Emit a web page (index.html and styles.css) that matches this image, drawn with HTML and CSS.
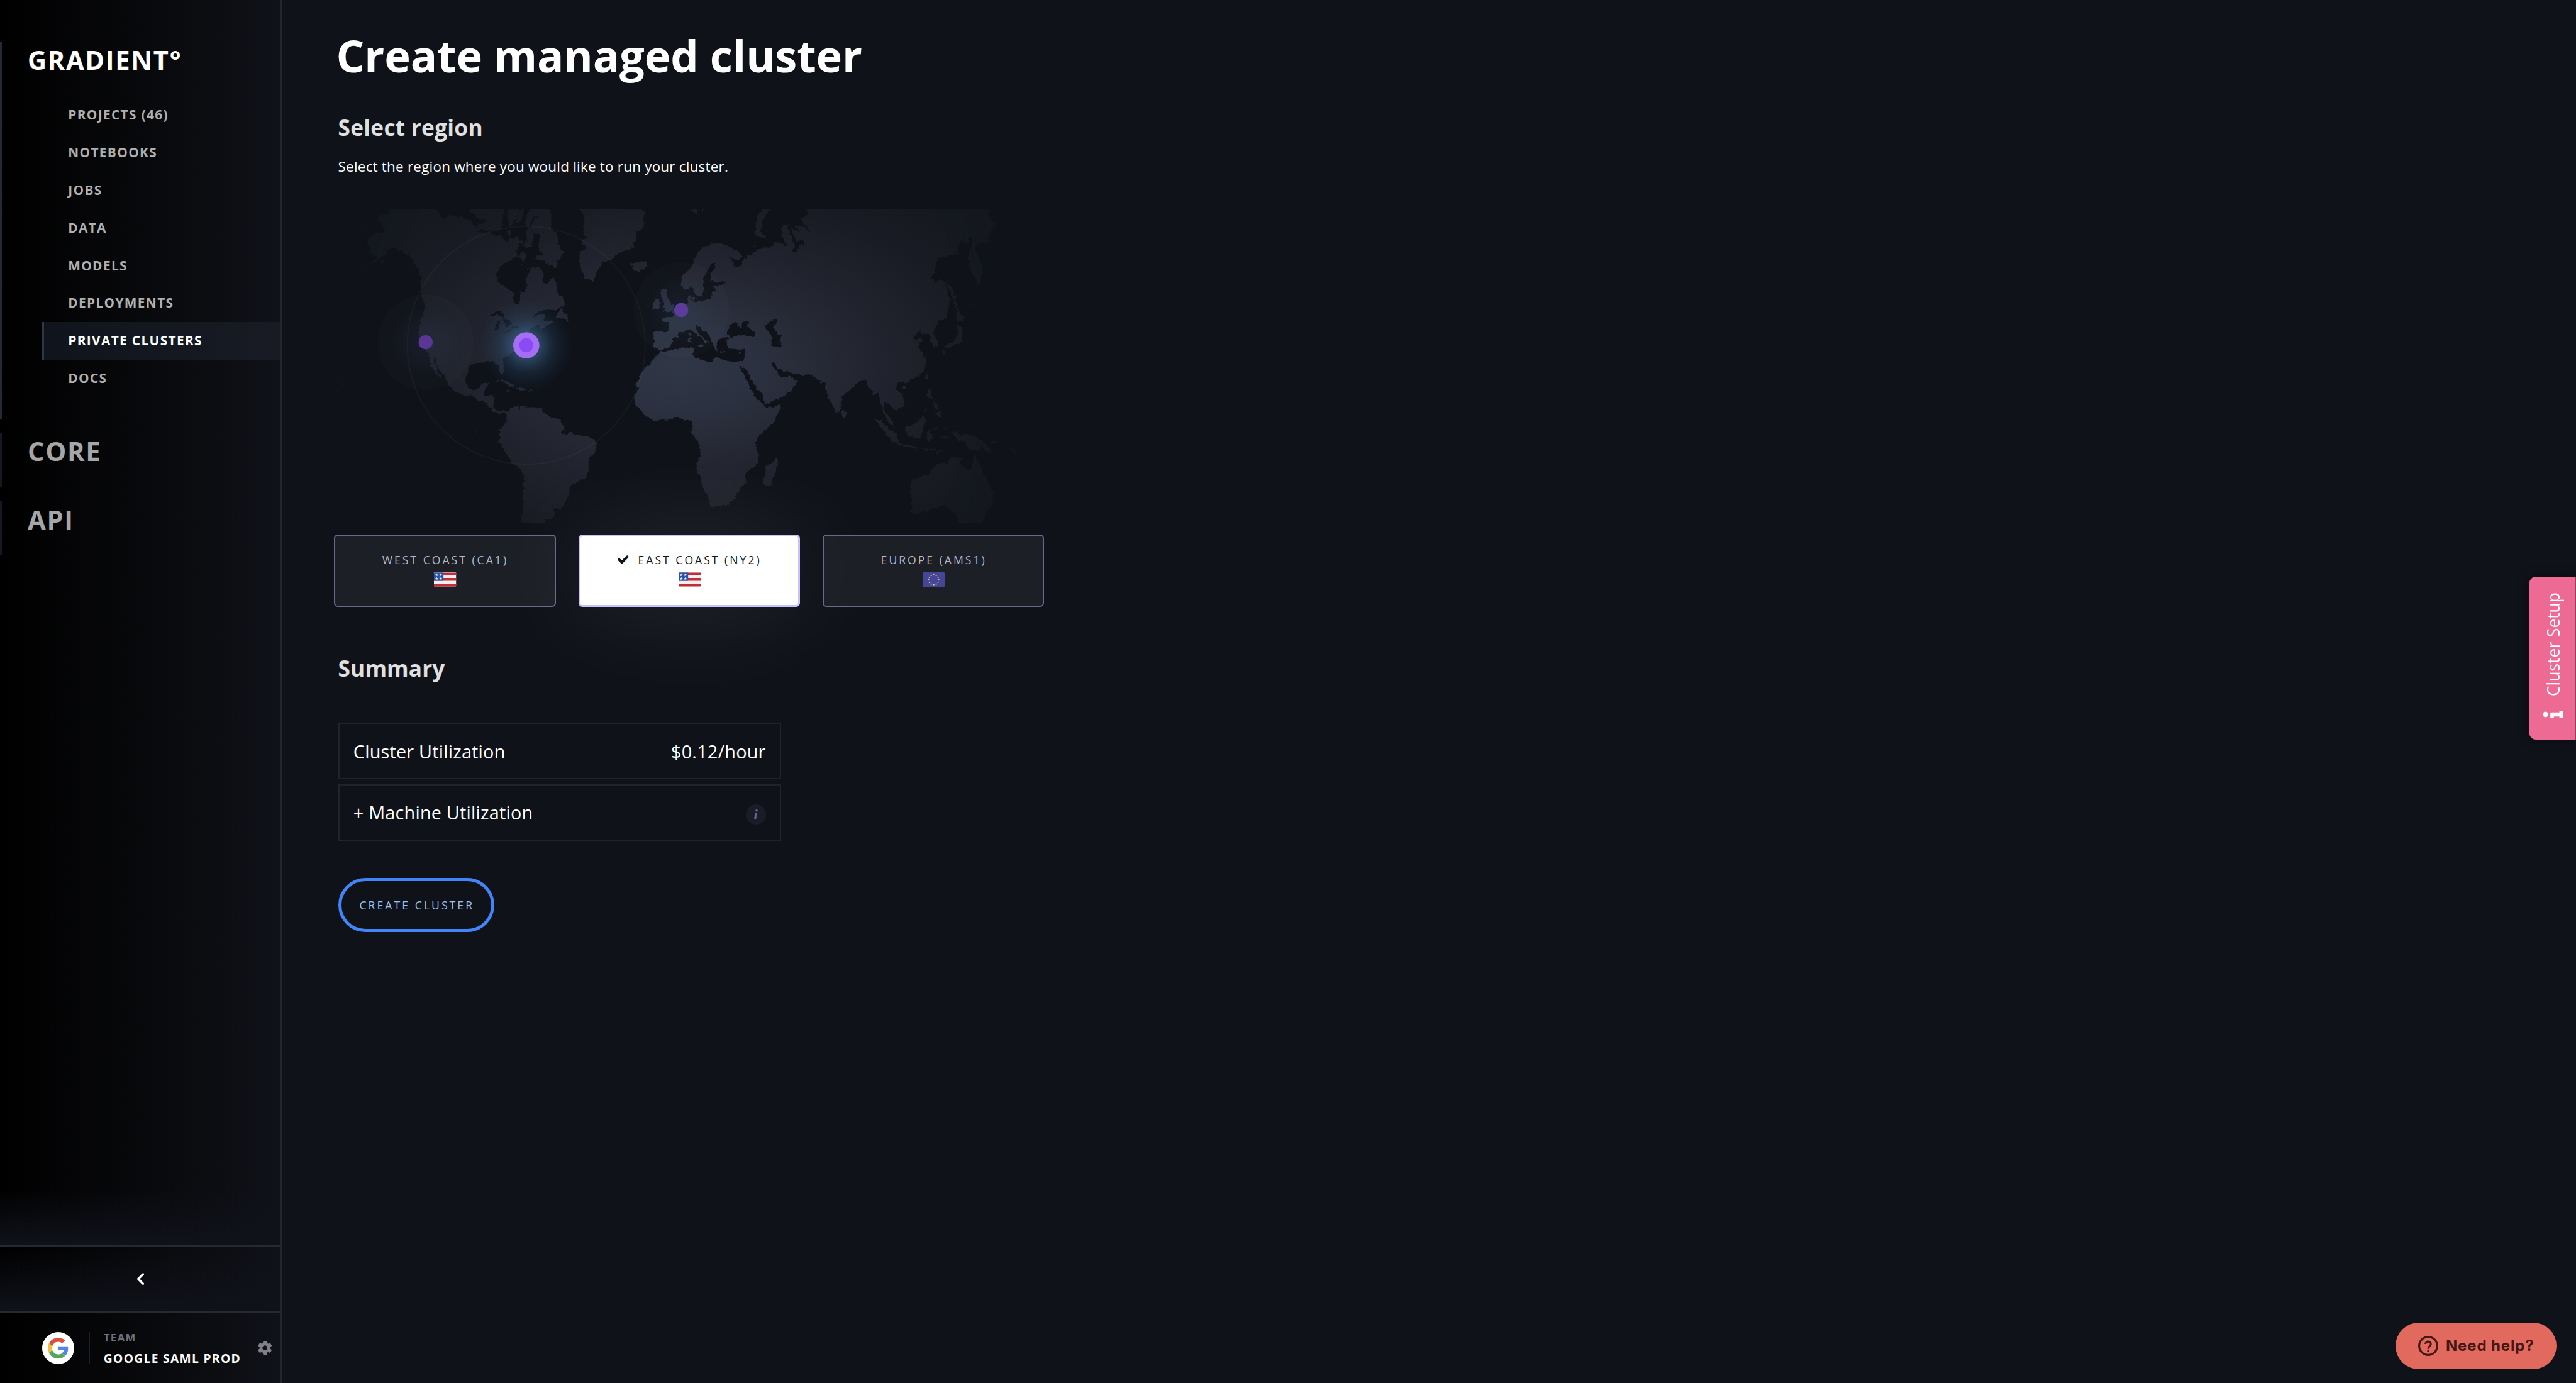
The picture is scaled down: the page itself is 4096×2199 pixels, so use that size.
FILE: index.html
```html
<!DOCTYPE html>
<html lang="en">
<head>
<meta charset="utf-8">
<title>Create managed cluster</title>
<link rel="stylesheet" href="styles.css">
</head>
<body>
<div class="app">
  <aside class="sidebar">
    <nav class="nav">
      <section class="product product-active">
        <h2 class="product-title">GRADIENT°</h2>
        <ul class="menu">
          <li class="menu-item">PROJECTS (46)</li>
          <li class="menu-item">NOTEBOOKS</li>
          <li class="menu-item">JOBS</li>
          <li class="menu-item">DATA</li>
          <li class="menu-item">MODELS</li>
          <li class="menu-item">DEPLOYMENTS</li>
          <li class="menu-item menu-item-active">PRIVATE CLUSTERS</li>
          <li class="menu-item">DOCS</li>
        </ul>
      </section>
      <section class="product"><h2 class="product-title">CORE</h2></section>
      <section class="product"><h2 class="product-title">API</h2></section>
    </nav>
    <div class="collapse">
      <svg class="chevron" viewBox="0 0 16 24"><path d="M13 2.5 3.5 12 13 21.5" fill="none" stroke="#fff" stroke-width="4.4" stroke-linecap="round" stroke-linejoin="round"/></svg>
    </div>
    <div class="team">
      <div class="avatar">
        <svg viewBox="0 0 48 48"><path fill="#d9503f" d="M24 9.5c3.54 0 6.71 1.22 9.21 3.6l6.85-6.85C35.9 2.38 30.47 0 24 0 14.62 0 6.51 5.38 2.56 13.22l7.98 6.19C12.43 13.72 17.74 9.5 24 9.5z"/><path fill="#5383ec" d="M46.98 24.55c0-1.57-.15-3.09-.38-4.55H24v9.02h12.94c-.58 2.96-2.26 5.48-4.78 7.18l7.73 6c4.51-4.18 7.09-10.36 7.09-17.65z"/><path fill="#f0bc42" d="M10.53 28.59c-.48-1.45-.76-2.99-.76-4.59s.27-3.14.76-4.59l-7.98-6.19C.92 16.46 0 20.12 0 24c0 3.88.92 7.54 2.56 10.78l7.97-6.19z"/><path fill="#58a55c" d="M24 48c6.48 0 11.93-2.13 15.89-5.81l-7.73-6c-2.15 1.45-4.92 2.3-8.16 2.3-6.26 0-11.57-4.22-13.47-9.91l-7.98 6.19C6.51 42.62 14.62 48 24 48z"/></svg>
      </div>
      <div class="team-name">
        <span class="team-label">TEAM</span>
        <span class="team-value">GOOGLE SAML PROD</span>
      </div>
      <svg class="gear" viewBox="2 2 20 20"><path fill="#808184" d="M19.43 12.98c.04-.32.07-.64.07-.98s-.03-.66-.07-.98l2.11-1.65c.19-.15.24-.42.12-.64l-2-3.46c-.12-.22-.39-.3-.61-.22l-2.49 1c-.52-.4-1.08-.73-1.69-.98l-.38-2.65C14.46 2.18 14.25 2 14 2h-4c-.25 0-.46.18-.49.42l-.38 2.65c-.61.25-1.17.59-1.69.98l-2.49-1c-.23-.09-.49 0-.61.22l-2 3.46c-.13.22-.07.49.12.64l2.11 1.65c-.04.32-.07.65-.07.98s.03.66.07.98l-2.11 1.65c-.19.15-.24.42-.12.64l2 3.46c.12.22.39.3.61.22l2.49-1c.52.4 1.08.73 1.69.98l.38 2.65c.03.24.24.42.49.42h4c.25 0 .46-.18.49-.42l.38-2.65c.61-.25 1.17-.59 1.69-.98l2.49 1c.23.09.49 0 .61-.22l2-3.46c.12-.22.07-.49-.12-.64l-2.11-1.65zM12 15.5c-1.93 0-3.5-1.57-3.5-3.5s1.57-3.5 3.5-3.5 3.5 1.57 3.5 3.5-1.57 3.5-3.5 3.5z"/></svg>
    </div>
  </aside>

  <main class="main">
    <h1 class="title">Create managed cluster</h1>
    <h2 class="heading region-heading">Select region</h2>
    <p class="hint">Select the region where you would like to run your cluster.</p>

    <svg class="map" viewBox="640 416 1440 624">
      <defs>
        <radialGradient id="land" gradientUnits="userSpaceOnUse" cx="0" cy="0" r="1" gradientTransform="translate(1346 728) scale(705 400)">
          <stop offset="0" stop-color="#2f3646"/><stop offset=".22" stop-color="#2b3140"/><stop offset=".45" stop-color="#252833"/><stop offset=".7" stop-color="#1d2029"/><stop offset=".88" stop-color="#181b23"/><stop offset="1" stop-color="#161920"/>
        </radialGradient>
        <radialGradient id="edge" gradientUnits="userSpaceOnUse" cx="1346" cy="728" r="715"><stop offset=".82" stop-color="#fff"/><stop offset="1" stop-color="#aaa"/></radialGradient>
        <radialGradient id="glow"><stop offset="0" stop-color="#46709c" stop-opacity=".75"/><stop offset=".3" stop-color="#3c648c" stop-opacity=".6"/><stop offset=".6" stop-color="#2c5074" stop-opacity=".27"/><stop offset="1" stop-color="#20405f" stop-opacity="0"/></radialGradient>
        <radialGradient id="dim"><stop offset="0" stop-color="#305078" stop-opacity=".18"/><stop offset="1" stop-color="#305078" stop-opacity="0"/></radialGradient>
        <filter id="coast" filterUnits="userSpaceOnUse" x="600" y="380" width="1520" height="700"><feTurbulence type="fractalNoise" baseFrequency=".12" numOctaves="3" seed="4"/><feDisplacementMap in="SourceGraphic" scale="8" xChannelSelector="R" yChannelSelector="G"/></filter>
        <mask id="world" maskUnits="userSpaceOnUse" x="640" y="416" width="1440" height="624">
          <g filter="url(#coast)">
            <g transform="translate(640 380) scale(.44643 .43367)" fill="#fff">
              <path d="M300,70 L500,70 L520,98 L522,112 L540,125 L560,112 L590,108 L605,118 L625,115 L640,130 L660,135 L672,148 L690,165 L705,178 L690,185 L720,192 L745,190 L760,200 L780,205 L790,195 L808,212 L815,228 L828,232 L832,215 L850,212 L870,205 L880,222 L900,232 L895,245 L880,240 L868,262 L862,280 L870,290 L865,300 L845,312 L830,320 L808,334 L790,350 L779,370 L775,388 L783,395 L782,418 L795,422 L812,435 L830,450 L850,460 L858,470 L853,490 L860,512 L872,518 L882,500 L882,465 L897,461 L912,448 L917,430 L912,412 L905,405 L915,395 L922,375 L928,348 L945,352 L960,347 L972,350 L980,368 L990,380 L984,392 L985,412 L997,424 L1012,412 L1022,400 L1030,392 L1040,428 L1046,460 L1066,478 L1078,498 L1080,520 L1064,530 L1040,545 L1010,542 L975,546 L955,560 L935,578 L900,602 L930,582 L960,567 L985,560 L990,575 L985,590 L1000,600 L1015,598 L1020,588 L1030,592 L1025,603 L1005,612 L985,625 L975,630 L968,620 L975,612 L955,615 L930,628 L922,640 L925,655 L900,665 L895,690 L880,710 L862,728 L840,742 L822,756 L808,768 L804,785 L808,812 L810,830 L803,840 L795,830 L788,810 L785,790 L770,785 L745,779 L720,782 L722,790 L705,785 L680,788 L658,798 L648,812 L648,830 L640,850 L638,870 L645,890 L655,905 L670,911 L690,908 L700,900 L705,885 L720,878 L740,878 L735,895 L722,915 L720,935 L740,936 L760,938 L769,948 L765,970 L762,988 L775,1004 L790,1008 L805,1003 L818,1010 L825,1018 L820,1026 L812,1018 L800,1012 L793,1024 L780,1018 L760,1008 L748,990 L728,966 L700,960 L685,948 L665,934 L645,938 L615,926 L590,912 L575,905 L562,890 L563,875 L548,850 L530,830 L512,800 L505,770 L494,752 L494,775 L508,798 L515,825 L530,852 L527,858 L505,835 L498,812 L484,800 L478,770 L472,738 L460,722 L440,680 L430,655 L429,635 L436,615 L437,595 L450,570 L457,545 L458,520 L445,495 L437,480 L445,460 L448,440 L440,420 L445,400 L435,380 L430,350 L415,340 L405,315 L385,295 L368,285 L350,268 L335,278 L335,262 L318,258 L300,270 L290,285 L270,300 L245,320 L215,335 L180,350 L140,365 L190,345 L222,325 L245,312 L248,295 L225,290 L210,280 L218,262 L205,245 L203,225 L210,210 L232,195 L270,185 L278,170 L262,160 L285,152 L245,142 L250,118 L270,112 L300,108 Z"/>
              <path d="M662,70 H815 V83 L805,110 L800,140 L808,150 L800,165 L790,178 L760,175 L735,185 L725,182 L690,165 L693,150 L725,145 L730,135 L685,120 L688,108 L660,98Z M825,70 H880 V83 L875,105 L855,130 L845,150 L835,160 L828,130Z M880,95 L900,70 L895,110 L880,140 L865,150 L858,140Z M905,130 L915,105 L930,70 H1020 L1018,120 L1020,175 L1040,185 L1045,205 L1055,215 L1050,240 L1060,255 L1070,270 L1083,288 L1065,295 L1060,312 L1045,315 L1048,340 L1040,352 L1025,340 L1005,335 L985,318 L960,312 L942,310 L950,300 L970,295 L980,290 L968,268 L962,240 L972,225 L970,208 L950,190 L935,175 L945,210 L935,230 L938,250 L915,262 L895,250 L915,215 L905,180 L932,165 L935,145 L950,125 L975,112 L960,110 L940,118 L928,140 L920,165 L908,160Z M875,300 L890,275 L905,285 L912,310 L895,320Z M970,252 L975,240 L988,246 L984,260Z M820,185 L838,180 L845,195 L832,205Z M845,268 L868,275 L860,285Z M885,335l14,4-8,6z M910,350l8,0-4,8z"/>
              <path d="M1130,70 H1425 V83 L1438,100 L1432,140 L1425,175 L1400,185 L1400,215 L1385,235 L1395,250 L1370,265 L1345,275 L1315,282 L1300,305 L1280,320 L1245,325 L1235,350 L1222,370 L1215,395 L1203,414 L1190,402 L1168,395 L1158,365 L1150,340 L1145,310 L1148,280 L1170,265 L1175,245 L1150,235 L1165,220 L1185,215 L1162,195 L1165,160 L1168,130 L1162,100Z M1370,320 L1385,330 L1400,322 L1440,320 L1450,338 L1440,352 L1410,367 L1390,362 L1380,350 L1388,342 L1372,335Z"/>
              <path d="M1072,528 L1068,545 L1085,560 L1095,575 L1092,592 L1075,588 L1060,578 L1040,580 L1045,565 L1062,545Z M765,872 L790,860 L815,866 L840,882 L858,892 L835,893 L820,880 L795,866Z M865,908 L880,898 L900,900 L915,908 L890,914Z M820,911h18v5h-15z M922,912h15v4h-15z M82,880 L95,888 L88,894Z M72,868l8,3-4,4z M255,325l20,-8 6,6 -18,8z M100,380l14,-7 2,4z M180,242l10,2-6,4z M188,158l12,4-4,6z M685,1098l8,6-6,2z"/>
              <path d="M820,1022 L830,1010 L842,995 L860,985 L878,978 L872,995 L880,1003 L885,985 L905,985 L925,992 L950,993 L975,990 L980,1005 L1000,1020 L1018,1036 L1045,1040 L1065,1055 L1072,1075 L1080,1090 L1062,1108 L1085,1115 L1100,1103 L1130,1115 L1165,1122 L1185,1126 L1210,1140 L1222,1152 L1225,1175 L1215,1195 L1190,1222 L1188,1260 L1182,1290 L1168,1318 L1140,1328 L1115,1345 L1104,1360 L1103,1385 L1085,1420 L1072,1445 L1055,1455 L1025,1450 L1038,1470 L1038,1485 L1020,1498 L998,1505 L990,1540 L893,1540 L887,1490 L897,1440 L895,1380 L898,1320 L893,1280 L870,1262 L850,1250 L835,1230 L815,1195 L800,1165 L785,1150 L785,1140 L795,1125 L787,1115 L795,1090 L805,1075 L822,1055 L822,1035Z"/>
              <path fill="#000" d="M745,572 L770,552 L795,546 L810,562 L808,578 L785,568Z M800,588 L778,602 L768,640 L778,640 L790,615Z M805,588 L835,590 L848,610 L832,608 L828,625 L815,618Z M806,646 L850,633 L848,640 L812,648Z M840,623 L878,616 L872,626 L850,628Z"/>
            </g>
            <g transform="translate(1300 380) scale(.45918 .43367)" fill="#fff">
              <path d="M28,735 L20,750 L0,758 L-13,790 L-42,812 L-57,835 L-62,855 L-78,882 L-71,905 L-83,950 L-76,985 L-57,1005 L-42,1025 L-13,1045 L6,1053 L36,1045 L60,1048 L90,1035 L115,1034 L130,1050 L160,1050 L168,1070 L165,1092 L158,1105 L182,1135 L195,1170 L203,1207 L190,1235 L183,1270 L195,1295 L206,1320 L213,1365 L235,1405 L240,1435 L250,1447 L285,1441 L315,1438 L340,1418 L362,1385 L373,1358 L395,1345 L400,1325 L393,1297 L415,1275 L438,1262 L452,1240 L450,1205 L440,1175 L438,1150 L455,1120 L490,1085 L520,1055 L540,1015 L548,985 L548,978 L510,990 L485,993 L472,975 L440,945 L418,910 L408,880 L393,855 L380,825 L368,797 L385,778 L340,782 L300,772 L270,762 L255,770 L250,790 L235,782 L205,770 L175,758 L167,750 L172,732 L170,715 L140,716 L100,722 L65,733Z"/>
              <path d="M370,795 L388,818 L388,798 L410,840 L428,872 L445,905 L468,935 L476,970 L490,970 L530,955 L570,935 L600,905 L622,872 L600,858 L585,840 L575,852 L550,853 L535,830 L520,812 L508,790 L522,790 L540,812 L565,830 L588,823 L600,835 L640,842 L682,837 L700,858 L715,868 L722,885 L738,873 L745,915 L760,955 L775,990 L790,1015 L805,1010 L812,975 L813,942 L835,920 L870,890 L880,875 L900,868 L915,868 L925,890 L942,912 L945,935 L968,925 L978,950 L985,985 L992,1010 L1005,1040 L1020,1065 L1040,1082 L1030,1050 L1008,1020 L995,1000 L998,962 L1015,972 L1030,990 L1045,1008 L1065,995 L1082,980 L1083,955 L1072,930 L1050,910 L1045,895 L1060,875 L1080,873 L1090,882 L1115,862 L1140,852 L1162,830 L1175,795 L1178,770 L1165,745 L1143,710 L1155,690 L1168,682 L1148,672 L1135,682 L1118,662 L1140,655 L1150,635 L1158,655 L1185,650 L1195,665 L1192,680 L1205,695 L1210,713 L1232,705 L1228,685 L1205,650 L1218,625 L1230,592 L1255,590 L1270,560 L1278,510 L1270,450 L1262,415 L1235,408 L1220,418 L1200,402 L1215,370 L1225,310 L1275,295 L1300,290 L1320,290 L1320,235 L1340,225 L1355,245 L1365,195 L1375,215 L1372,250 L1360,300 L1362,340 L1385,390 L1408,435 L1418,390 L1422,350 L1408,310 L1392,265 L1395,245 L1415,235 L1442,237 L1450,200 L1465,165 L1483,160 L1465,130 L1450,110 L1448,70 L650,70 L668,105 L630,125 L640,140 L655,150 L672,185 L668,190 L655,165 L620,155 L610,165 L632,182 L608,178 L600,165 L590,160 L600,190 L605,215 L620,235 L635,222 L655,250 L630,240 L625,270 L612,283 L595,278 L610,262 L605,235 L590,200 L580,175 L578,152 L555,152 L550,195 L560,225 L578,248 L540,232 L515,230 L518,245 L500,258 L480,255 L455,265 L430,285 L415,295 L405,285 L395,310 L378,320 L380,338 L360,350 L345,340 L340,320 L318,300 L345,312 L370,318 L382,300 L375,280 L345,265 L310,248 L280,238 L250,238 L215,255 L190,280 L172,320 L160,350 L120,385 L116,410 L120,440 L140,453 L162,435 L172,460 L182,480 L205,478 L212,455 L215,415 L212,400 L225,375 L240,345 L248,330 L265,330 L265,350 L245,375 L245,400 L262,420 L290,415 L312,418 L285,430 L255,435 L270,460 L250,465 L245,495 L210,500 L180,508 L160,500 L155,470 L143,480 L148,512 L130,520 L105,522 L90,545 L75,555 L85,570 L60,575 L38,580 L35,590 L60,602 L66,620 L63,643 L20,642 L-3,645 L-1,680 L-3,713 L15,718 L25,730 L60,720 L75,700 L80,680 L105,665 L105,650 L130,645 L150,633 L165,638 L190,660 L215,685 L215,705 L225,690 L240,692 L205,665 L183,635 L183,618 L200,622 L215,640 L240,660 L250,690 L262,715 L275,735 L270,710 L275,680 L300,672 L330,670 L318,655 L322,625 L340,603 L362,605 L360,620 L380,628 L378,605 L410,595 L400,615 L435,650 L438,662 L420,668 L370,658 L340,668 L315,680 L312,700 L322,722 L350,722 L370,728 L393,718 L395,740 L385,778Z"/>
              <path fill="#000" d="M480,620 L500,598 L515,590 L532,592 L530,610 L515,618 L525,640 L540,655 L553,665 L545,675 L552,712 L535,716 L510,705 L505,685 L515,672 L500,650Z"/>
              <path d="M470,70 H508 V83 L490,95 L478,120 L465,150 L460,185 L485,215 L460,215 L436,198 L442,155 L448,115Z M35,447 L60,447 L52,465 L62,490 L78,520 L88,528 L80,550 L45,556 L50,540 L38,520 L42,500 L28,480 L25,460Z M6,495 L25,492 L25,515 L20,538 L-8,543 L-5,515Z M160,80 L187,80 L185,110Z M205,80h18l-5,9h-12z M150,652h8v12h-6z M150,672h10v22h-8z M188,705 L212,705 L205,717Z M285,735h22v4h-20z M365,740l15,-5-5,8z M160,488l14,-4 4,14-12,2z M430,248l10,0-4,10z"/>
              <path d="M815,1000 L830,1015 L832,1033 L820,1037 L812,1020Z M530,1215 L538,1245 L525,1290 L505,1345 L488,1353 L473,1340 L472,1315 L483,1290 L480,1262 L510,1248Z M955,1042 L980,1050 L1010,1080 L1050,1110 L1057,1150 L1035,1150 L1000,1105 L975,1070Z M1052,1155 L1090,1162 L1130,1168 L1155,1180 L1120,1178 L1060,1165Z M1160,1180h58v6h-50z M1215,1195l30,-12 4,3-25,14z M1088,1080 L1110,1078 L1140,1055 L1160,1030 L1175,1048 L1165,1075 L1168,1100 L1150,1130 L1120,1130 L1095,1120Z M1185,1095 L1230,1082 L1232,1088 L1195,1098 L1195,1110 L1215,1108 L1200,1120 L1212,1145 L1198,1135 L1190,1150 L1180,1125Z M1183,905 L1200,910 L1200,935 L1215,955 L1200,950 L1182,935Z M1205,960 L1230,975 L1228,1005 L1210,990Z M1210,1020 L1240,1005 L1245,1025 L1235,1038Z M1182,830 L1186,850 L1180,865 L1174,850Z M1072,898 L1082,888 L1092,896 L1082,910Z M1162,1010l20,-20-6,14z M1258,1075l8,12-6,8z M1240,1128h36v5h-34z"/>
              <path d="M1310,535 L1330,565 L1350,575 L1335,590 L1312,598 L1308,580Z M1315,610 L1330,620 L1335,660 L1332,690 L1300,705 L1270,718 L1250,715 L1280,695 L1300,685 L1315,655Z M1248,722 L1262,730 L1258,752 L1248,740Z M1272,712h14l-6,8z M1265,400 L1285,430 L1310,490 L1300,490 L1318,540 L1305,530 L1290,480 L1272,440Z M1375,530l8,-10 0,6z M1400,460l4,-14 3,2z M1285,1102 L1310,1102 L1320,1120 L1350,1110 L1400,1130 L1425,1145 L1440,1165 L1470,1203 L1440,1195 L1420,1175 L1395,1190 L1360,1180 L1350,1150 L1310,1135Z M1450,1155 L1480,1140 L1488,1146 L1470,1158Z M1510,1150 L1568,1200 L1560,1200Z"/>
              <path d="M1115,1325 L1150,1310 L1190,1295 L1210,1265 L1245,1240 L1270,1248 L1285,1220 L1330,1220 L1325,1245 L1350,1270 L1368,1280 L1380,1250 L1390,1205 L1400,1240 L1412,1250 L1420,1295 L1440,1315 L1455,1350 L1470,1375 L1468,1415 L1450,1460 L1430,1490 L1418,1540 L1325,1540 L1315,1490 L1300,1500 L1312,1470 L1292,1480 L1280,1450 L1245,1442 L1200,1455 L1180,1468 L1125,1480 L1108,1468 L1118,1440 L1112,1400 L1110,1360Z"/>
            </g>
          </g>
        </mask>
        <mask id="fade" maskUnits="userSpaceOnUse" x="640" y="416" width="1440" height="624"><rect x="640" y="416" width="1440" height="624" fill="url(#edge)"/></mask>
      </defs>
      <g mask="url(#fade)"><rect x="640" y="416" width="1440" height="624" fill="url(#land)" mask="url(#world)"/></g>
      <circle cx="846" cy="680" r="95" fill="#fff" fill-opacity=".017"/>
      <circle cx="846" cy="680" r="70" fill="url(#dim)"/>
      <circle cx="846" cy="680" r="14" fill="#5a3794"/>
      <circle cx="1354" cy="616" r="95" fill="#fff" fill-opacity=".015"/>
      <circle cx="1354" cy="616" r="70" fill="url(#dim)"/>
      <circle cx="1354" cy="616" r="14" fill="#5b3c9b"/>
      <circle cx="1046" cy="686" r="236.5" fill="none" stroke="#fff" stroke-opacity=".035" stroke-width="2.5"/>
      <circle cx="1046" cy="686" r="92" fill="url(#glow)"/>
      <circle cx="1046" cy="686" r="26" fill="#a56ef7"/>
      <circle cx="1046" cy="686" r="14" fill="#8b4af4"/>
    </svg>

    <div class="regions">
      <button class="region">
        <span class="region-name">WEST COAST (CA1)</span>
        <svg class="flag" viewBox="0 0 44 28"><use href="#us"/></svg>
      </button>
      <button class="region region-selected">
        <span class="region-name"><svg class="check" viewBox="0 0 22 17"><path d="M3 8.5 8.5 13.8 19 3.2" fill="none" stroke="#10131b" stroke-width="5.2" stroke-linecap="round"/></svg>EAST COAST (NY2)</span>
        <svg class="flag" viewBox="0 0 44 28">
          <defs>
            <path id="star" d="M0-3 .8-1 2.9-.9 1.3.4 1.8 2.5 0 1.3-1.8 2.5-1.3.4-2.9-.9-.8-1z"/>
            <g id="us">
              <rect width="44" height="28" rx="1.5" fill="#efefef"/>
              <path fill="#c22d37" d="M1 .6H44V5.600H0zM0 11.4H44V17H0zM0 22.600H44V26.500Q44 28 42.500 28H1.500Q0 28 0 26.500z"/>
              <path fill="#2955a8" d="M0 1.500Q0 .6 1 .6H19V16.800H0z"/>
              <g fill="#fff"><use href="#star" x="5.300" y="5.300"/><use href="#star" x="13.500" y="5.300"/><use href="#star" x="5.300" y="12.700"/><use href="#star" x="13.500" y="12.700"/></g>
            </g>
          </defs>
          <use href="#us"/>
        </svg>
      </button>
      <button class="region">
        <span class="region-name">EUROPE (AMS1)</span>
        <svg class="flag" viewBox="0 0 44 28"><rect width="44" height="29" rx="2.500" fill="#454796"/><g fill="#e3d38e"><circle cx="22" cy="5" r="1.400"/><circle cx="27" cy="6.300" r="1.400"/><circle cx="30.700" cy="10" r="1.400"/><circle cx="32" cy="15" r="1.400"/><circle cx="30.700" cy="19.800" r="1.400"/><circle cx="27" cy="23.300" r="1.400"/><circle cx="22" cy="24.600" r="1.400"/><circle cx="17" cy="23.300" r="1.400"/><circle cx="13.500" cy="19.800" r="1.400"/><circle cx="12" cy="15" r="1.400"/><circle cx="13.500" cy="10" r="1.400"/><circle cx="17" cy="6.300" r="1.400"/></g></svg>
      </button>
    </div>

    <h2 class="heading summary-heading">Summary</h2>
    <div class="summary">
      <div class="line"><span>Cluster Utilization</span><span>$0.12/hour</span></div>
      <div class="line"><span>+ Machine Utilization</span><span class="info">i</span></div>
    </div>
    <button class="create">CREATE CLUSTER</button>
  </main>

  <div class="tab"><svg class="tab-icon" viewBox="0 0 16 40"><circle cx="8" cy="5.500" r="5.500" fill="#fff"/><path fill="#fff" d="M1 15H10Q12 15 12 17V33H14.500Q15.500 33 15.500 34V39Q15.500 40 14.500 40H1.500Q.5 40 .5 39V34Q.5 33 1.500 33H4V22H1.500Q.5 22 .5 21V16Q.5 15 1.500 15z"/></svg><span class="tab-label">Cluster Setup</span></div>
  <button class="help">
    <svg class="help-icon" viewBox="0 0 40 40" fill="none" stroke="#451815"><circle cx="20" cy="20" r="18" stroke-width="4"/><path d="M14.600 16.200C14.600 9.800 25.300 9.800 25.300 16.400C25.300 20.500 20 20.800 20 26" stroke-width="3.800"/><circle cx="20" cy="30" r="2.200" fill="#451815" stroke="none"/></svg>
    <span>Need help?</span>
  </button>
</div>
</body>
</html>
```
FILE: styles.css
```css
* { box-sizing: border-box; margin: 0; padding: 0; }

body {
  background: #0f1219;
  color: #fff;
  font-family: "Open Sans", sans-serif;
  overflow: hidden;
}

button { font: inherit; color: inherit; background: none; border: 0; }
svg { display: block; }

.app { display: flex; height: 2199px; position: relative; }

/* Sidebar */
.sidebar {
  display: flex;
  flex-direction: column;
  width: 448px;
  flex: none;
  border-right: 2px solid #24262f;
  background: linear-gradient(90deg, #000 0, #0c0d11 75%, #0f1219 100%);
}
.nav {
  flex: 1;
  display: flex;
  flex-direction: column;
  gap: 22.4px;
  padding-top: 65.6px;
  background: linear-gradient(0deg, #10121a 0, rgba(16, 18, 26, 0) 90px);
}
.product { border-left: 3px solid #171821; height: 86.4px; color: #a6a6a6; }
.product-active { height: 600px; border-left-color: #262938; color: #fff; }
.product-title {
  padding-left: 41px;
  font-size: 41.6px;
  line-height: 58.6px;
  font-weight: 700;
  letter-spacing: 1.7px;
}
.menu { list-style: none; padding: 29px 0 0 64.2px; }
.menu-item {
  padding-left: 38px;
  border-left: 3px solid transparent;
  height: 59.84px;
  line-height: 59.84px;
  font-size: 20.8px;
  font-weight: 700;
  letter-spacing: 1.38px;
  color: #b0b0b0;
}
.menu-item-active {
  color: #fff;
  border-left-color: #30364a;
  background: linear-gradient(90deg, #10141c, #181b23);
}
.collapse {
  display: flex;
  align-items: center;
  justify-content: center;
  height: 105.6px;
  border-top: 2px solid #262832;
  background: linear-gradient(0deg, #10121a 0, rgba(16, 18, 26, 0) 100px);
}
.chevron { width: 12.8px; height: 19.2px; }
.team {
  display: flex;
  align-items: center;
  height: 113.6px;
  padding: 0 13.8px 0 67.2px;
  border-top: 2px solid #262832;
}
.avatar {
  width: 51.2px;
  height: 51.2px;
  border-radius: 50%;
  background: #fff;
  display: flex;
  align-items: center;
  justify-content: center;
}
.avatar svg { width: 33px; height: 33px; }
.team-name {
  display: flex;
  flex-direction: column;
  flex: 1;
  height: 51.2px;
  margin-left: 22.4px;
  padding-left: 22px;
  border-left: 2px solid #1d2029;
  font-weight: 700;
  white-space: nowrap;
}
.team-label { font-size: 16.8px; line-height: 22px; letter-spacing: 1.38px; margin-top: -1.4px; color: #6c707b; }
.team-value { font-size: 19.2px; line-height: 24px; letter-spacing: 1.35px; margin-top: 9.4px; }
.gear { width: 22.4px; height: 22.4px; }

/* Main column */
.main { flex: 1; padding: 40px 0 0 89.6px; }
.title { font-size: 70.4px; line-height: 96px; font-weight: 700; letter-spacing: -.12px; margin-left: -3px; }
.heading { font-size: 35.2px; line-height: 48px; font-weight: 700; letter-spacing: .15px; color: #e0e0e0; }
.region-heading { margin-top: 42.4px; letter-spacing: .29px; }
.hint { margin-top: 22.2px; font-size: 22.4px; line-height: 32px; letter-spacing: .24px; }
.map { width: 1152px; height: 499.2px; margin: 52.4px 0 0 -25.6px; }

.regions { display: flex; gap: 36px; margin: 17.6px 0 0 -6.4px; }
.region {
  width: 352.4px;
  height: 115.2px;
  padding: 26.4px 0 0 1px;
  display: flex;
  flex-direction: column;
  align-items: center;
  border: 2px solid #676a88;
  border-radius: 6px;
  background: rgba(255, 255, 255, .055);
  color: #b7b8c6;
}
.region-name {
  display: flex;
  align-items: center;
  font-size: 17.6px;
  line-height: 24px;
  letter-spacing: 3px;
}
.region-selected {
  padding-top: 25.2px;
  border: 3px solid #c6c3ff;
  background: #fff;
  color: #10131b;
  box-shadow: 0 0 176px rgba(255, 255, 255, .11);
}
.check { width: 17.6px; height: 13.6px; margin-right: 15px; }
.flag { width: 35.2px; height: 22.4px; margin-top: 8px; overflow: visible; }

.summary-heading { margin-top: 73.2px; }
.summary { display: flex; flex-direction: column; gap: 8px; width: 704px; margin-top: 63.3px; }
.line {
  display: flex;
  align-items: center;
  justify-content: space-between;
  height: 89.6px;
  padding: 0 22px 0 22.2px;
  border: 2px solid #212327;
  font-size: 28.8px;
  letter-spacing: .22px;
}
.info {
  width: 32px;
  height: 32px;
  margin-top: 6px;
  border-radius: 50%;
  background: #1a1c28;
  color: #62678a;
  font: italic 700 24px/32px "Liberation Serif", serif;
  text-align: center;
}
.create {
  width: 248px;
  height: 86.4px;
  margin-top: 59.2px;
  padding-left: 2.4px;
  border: 5px solid #4285f8;
  border-radius: 44px;
  color: #9cc2f2;
  font-size: 17.6px;
  letter-spacing: 3.05px;
}

/* Floating widgets */
.tab {
  position: absolute;
  right: 0;
  top: 917.2px;
  width: 73.6px;
  height: 259px;
  border-radius: 0 11px 11px 0;
  background: #ec6a93;
  box-shadow: 0 0 16px rgba(0, 0, 0, .5);
  writing-mode: vertical-rl;
  transform: rotate(180deg);
  display: flex;
  align-items: center;
  padding-top: 33.6px;
  gap: 22.4px;
  font-size: 26.4px;
  line-height: 36px;
}
.tab-icon { width: 12.8px; height: 32px; transform: rotate(90deg); margin: -9.6px 0; }
.tab-label { margin-right: 2px; }
.help {
  position: absolute;
  left: 3809.4px;
  top: 2103.2px;
  width: 256px;
  height: 73.6px;
  border-radius: 37px;
  background: #e2695e;
  color: #451815;
  display: flex;
  align-items: center;
  padding-left: 35.2px;
  gap: 12.4px;
  font: 700 24px "Inter", sans-serif;
  letter-spacing: .86px;
}
.help-icon { width: 32px; height: 32px; }
```
